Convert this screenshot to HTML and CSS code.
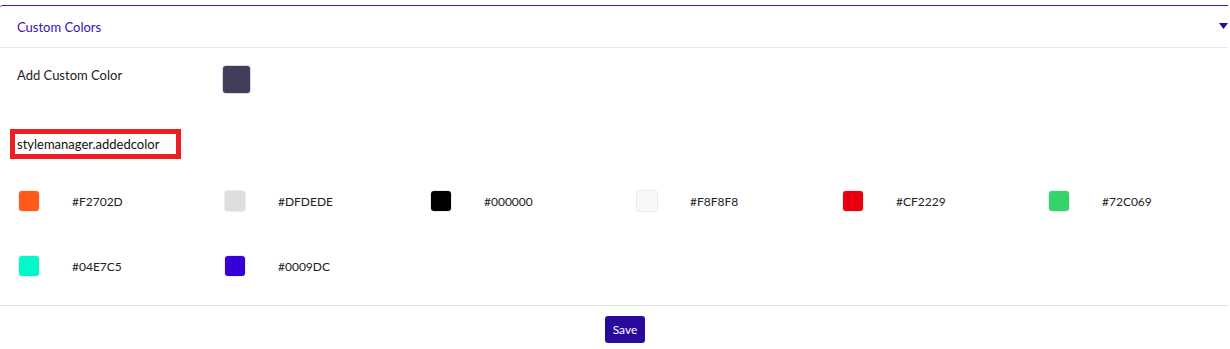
FILE: index.html
```html
<!DOCTYPE html>
<html lang="en">
<head>
    <meta charset="UTF-8">
    <meta name="viewport" content="width=device-width, initial-scale=1.0">
    <title>Custom Colors</title>
    <link rel="stylesheet" href="styles.css">
</head>
<body>
    <div class="card">
        <div class="card-header">
            <span class="card-title">Custom Colors</span>
            <svg class="chevron" width="9" height="6" viewBox="0 0 9 6"><path d="M0 0 L9 0 L4.5 6 Z" fill="#2a0a9c"/></svg>
        </div>
        <div class="card-body">
            <div class="add-row">
                <span class="add-label">Add Custom Color</span>
                <span class="picker"></span>
            </div>
            <div class="added-title"><span class="marked">stylemanager.addedcolor</span></div>
            <div class="color-grid">
                <div class="color-item"><span class="swatch" style="background:#ff5a1a"></span><span class="hex">#F2702D</span></div>
                <div class="color-item"><span class="swatch" style="background:#dfdede"></span><span class="hex">#DFDEDE</span></div>
                <div class="color-item"><span class="swatch" style="background:#000000"></span><span class="hex">#000000</span></div>
                <div class="color-item"><span class="swatch" style="background:#f8f8f8"></span><span class="hex">#F8F8F8</span></div>
                <div class="color-item"><span class="swatch" style="background:#e8000f"></span><span class="hex">#CF2229</span></div>
                <div class="color-item"><span class="swatch" style="background:#35d36c"></span><span class="hex">#72C069</span></div>
                <div class="color-item"><span class="swatch" style="background:#04f7c8"></span><span class="hex">#04E7C5</span></div>
                <div class="color-item"><span class="swatch" style="background:#3800d8"></span><span class="hex">#0009DC</span></div>
            </div>
        </div>
        <div class="card-footer">
            <button class="save-button">Save</button>
        </div>
    </div>
</body>
</html>
```

FILE: styles.css
```css
body {
    margin: 0;
    font-family: Lato, "Liberation Sans", sans-serif;
    background-color: #ffffff;
    color: #212529;
}

.card {
    margin-top: 5px;
    width: 1228px;
    border-top: 1px solid #3b1eb0;
    border-top-left-radius: 3px;
    box-sizing: border-box;
}

.card-header {
    height: 41px;
    display: flex;
    align-items: center;
    justify-content: space-between;
    padding: 0 0 0 17px;
    border-bottom: 1px solid #e6e6e6;
}

.card-title {
    font-size: 13px;
    color: #3a12b0;
}

.chevron {
    margin-top: -1px;
}

.card-body {
    padding: 18px 0 29px 17px;
}

.add-row {
    display: flex;
    align-items: flex-start;
    height: 27px;
}

.add-label {
    width: 206px;
    font-size: 13px;
    line-height: 20px;
    color: #222;
    margin-top: -1px;
}

.picker {
    width: 27px;
    height: 27px;
    border-radius: 3px;
    background-color: #433c5a;
    box-shadow: 0 0 0 1px #d9d9e0;
}

.added-title {
    margin-top: 40px;
    height: 22px;
    display: flex;
    align-items: center;
}

.marked {
    font-size: 13px;
    color: #111;
    outline: 5px solid #ee1c25;
    outline-offset: -1px;
    padding: 0 0 0 3px;
    margin-left: -3px;
    width: 163px;
    box-sizing: border-box;
    line-height: 22px;
}

.color-grid {
    display: grid;
    grid-template-columns: repeat(6, 206px);
    row-gap: 45px;
    margin-top: 36px;
    padding-left: 2px;
}

.color-item {
    display: flex;
    align-items: center;
    height: 20px;
}

.swatch {
    width: 20px;
    height: 20px;
    border-radius: 3px;
    box-shadow: 0 0 0 1px #ececec;
}

.hex {
    margin-left: 33px;
    font-size: 12px;
    color: #222;
}

.card-footer {
    border-top: 1px solid #e0e0e0;
    display: flex;
    justify-content: center;
    padding: 10px 0 0 22px;
}

.save-button {
    width: 40px;
    height: 27px;
    padding: 0;
    border: none;
    border-radius: 3px;
    background-color: #2a0a9c;
    color: #ffffff;
    font-family: Lato, "Liberation Sans", sans-serif;
    font-size: 12px;
}
```
